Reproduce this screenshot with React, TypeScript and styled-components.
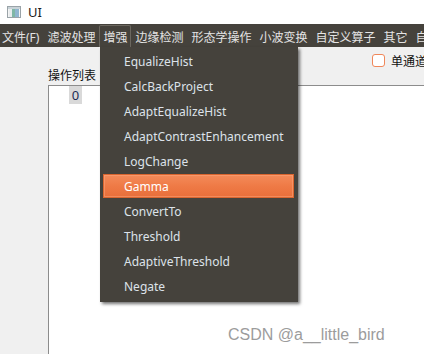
import React from 'react';
import styled, { createGlobalStyle } from 'styled-components';

const GlobalStyle = createGlobalStyle`
  html, body {
    margin: 0;
    padding: 0;
    background: #ffffff;
  }
  body {
    font-family: "Noto Sans", "Noto Sans CJK SC", sans-serif;
    font-size: 12px;
  }
`;

const Window = styled.div`
  position: relative;
  width: 424px;
  height: 354px;
  overflow: hidden;
  display: flex;
  flex-direction: column;
  background: #f0f0f0;
`;

const TitleBar = styled.div`
  height: 24px;
  flex-shrink: 0;
  background: #ffffff;
  display: flex;
  align-items: center;
  padding-left: 7px;
  gap: 7px;
`;

const TitleText = styled.span`
  font-size: 13px;
  color: #1a1a1a;
  line-height: 1;
`;

const MenuBar = styled.div`
  height: 23px;
  flex-shrink: 0;
  background: #45423c;
  display: flex;
  align-items: stretch;
  white-space: nowrap;
`;

const MenuBarItem = styled.div<{ $active?: boolean }>`
  display: flex;
  align-items: center;
  padding: 0 3px;
  margin-top: 1px;
  border: 1px solid ${({ $active }) => ($active ? '#6b675f' : 'transparent')};
  border-bottom: none;
  border-radius: 2px 2px 0 0;
  color: #e4e4e4;
  font-size: 12px;
  &:first-child {
    padding-left: 1px;
  }
`;

const Body = styled.div`
  flex: 1;
  display: flex;
  flex-direction: column;
  padding-left: 48px;
  min-height: 0;
`;

const OptionsRow = styled.div`
  display: flex;
  justify-content: flex-end;
  align-items: center;
  gap: 6px;
  height: 13px;
  margin-top: 7px;
  margin-right: -3px;
  white-space: nowrap;
`;

const CheckBox = styled.span`
  width: 11px;
  height: 11px;
  border: 1px solid #f0875a;
  border-radius: 3px;
  background: #ffffff;
`;

const OptionLabel = styled.span`
  font-size: 12px;
  color: #111;
`;

const ListLabel = styled.div`
  font-size: 12px;
  line-height: 16px;
  height: 16px;
  margin-top: 1px;
  color: #111;
  margin-bottom: 1px;
`;

const ListBox = styled.div`
  flex: 1;
  margin-right: -2px;
  background: #ffffff;
  border: 1px solid #8c8c8c;
  border-bottom: none;
  display: flex;
  flex-direction: column;
  align-items: flex-start;
`;

const ListItem = styled.div`
  margin-left: 20px;
  width: 13px;
  height: 18px;
  background: #d9d9d9;
  color: #1c2c55;
  font-size: 13px;
  line-height: 18px;
  text-align: center;
`;

const DropMenu = styled.div`
  position: absolute;
  left: 100px;
  top: 47px;
  width: 198px;
  padding: 2px 0 3px;
  background: #45423c;
  box-shadow: 2px 2px 3px rgba(0, 0, 0, 0.55);
  display: flex;
  flex-direction: column;
`;

const DropItem = styled.div<{ $selected?: boolean }>`
  box-sizing: border-box;
  height: 24px;
  line-height: 23px;
  margin: 0 4px 1px 3px;
  padding-left: 20px;
  font-size: 12px;
  color: ${({ $selected }) => ($selected ? '#ffffff' : '#dde3ea')};
  border: 1px solid ${({ $selected }) => ($selected ? '#d9652f' : 'transparent')};
  background: ${({ $selected }) =>
    $selected ? 'linear-gradient(to bottom, #f38b5a 0%, #ef7a46 50%, #e86f3b 100%)' : 'transparent'};
  box-shadow: ${({ $selected }) => ($selected ? 'inset 0 0 0 1px rgba(255, 170, 130, 0.45)' : 'none')};
`;

const Watermark = styled.div`
  position: absolute;
  left: 228px;
  top: 326px;
  font-family: "Liberation Sans", Arial, sans-serif;
  font-size: 16px;
  line-height: 18px;
  color: #9c9c9c;
  white-space: nowrap;
`;

const AppIcon = () => (
  <svg width="14" height="12" viewBox="0 0 14 12">
    <rect x="0.5" y="0.5" width="13" height="11" fill="#f4f4f4" stroke="#9aa3a8" />
    <rect x="1" y="1" width="12" height="2" fill="#c9d3d8" />
    <rect x="2" y="3" width="3" height="8" fill="#e8ecee" />
    <rect x="5" y="3" width="3" height="8" fill="#7fb7a6" />
    <rect x="8" y="3" width="4" height="8" fill="#8fb5cf" />
  </svg>
);

const menus = ['文件(F)', '滤波处理', '增强', '边缘检测', '形态学操作', '小波变换', '自定义算子', '其它', '自定义'];

const enhanceItems = [
  'EqualizeHist',
  'CalcBackProject',
  'AdaptEqualizeHist',
  'AdaptContrastEnhancement',
  'LogChange',
  'Gamma',
  'ConvertTo',
  'Threshold',
  'AdaptiveThreshold',
  'Negate',
];

const App = () => {
  return (
    <>
      <GlobalStyle />
      <Window>
        <TitleBar>
          <AppIcon />
          <TitleText>UI</TitleText>
        </TitleBar>
        <MenuBar>
          {menus.map((m) => (
            <MenuBarItem key={m} $active={m === '增强'}>
              {m}
            </MenuBarItem>
          ))}
        </MenuBar>
        <Body>
          <OptionsRow>
            <CheckBox />
            <OptionLabel>单通道</OptionLabel>
          </OptionsRow>
          <ListLabel>操作列表</ListLabel>
          <ListBox>
            <ListItem>0</ListItem>
          </ListBox>
        </Body>

        <DropMenu>
          {enhanceItems.map((item) => (
            <DropItem key={item} $selected={item === 'Gamma'}>
              {item}
            </DropItem>
          ))}
        </DropMenu>

        <Watermark>CSDN @a__little_bird</Watermark>
      </Window>
    </>
  );
};

export default App;
